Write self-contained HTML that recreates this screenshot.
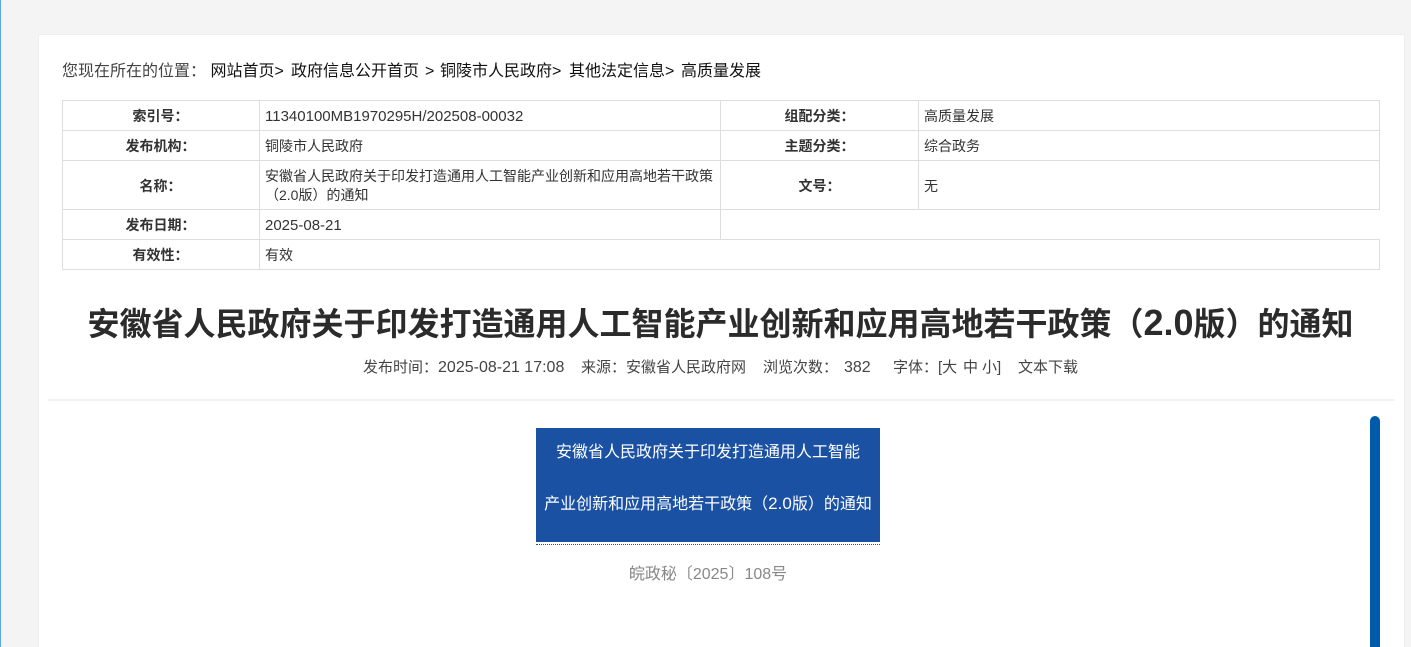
<!DOCTYPE html>
<html lang="zh">
<head>
<meta charset="utf-8">
<title>安徽省人民政府关于印发打造通用人工智能产业创新和应用高地若干政策（2.0版）的通知</title>
<style>
html,body{margin:0;padding:0;width:1411px;height:647px;overflow:hidden;background:#f4f4f4;}
body{position:relative;font-family:"Liberation Sans","Noto Sans CJK SC",sans-serif;color:#333;}
div{position:absolute;box-sizing:border-box;}
.t{white-space:nowrap;line-height:20px;}
.h{background:#ddd;height:1px;}
.v{background:#ddd;width:1px;}
.lab{font-size:14px;font-weight:bold;text-align:center;color:#333;}
.val{font-size:14px;color:#333;}
.bc{font-size:16px;color:#111;top:62px;}
.m{font-size:15px;color:#444;top:358px;}
.n{font-size:16px;}
</style>
</head>
<body>
<div style="left:0;top:0;width:1px;height:647px;background:#5fa3e3;"></div>
<div style="left:38px;top:34px;width:1367px;height:640px;background:#fff;border:1px solid #eee;"></div>

<div class="t bc" style="left:62px;color:#444;">您现在所在的位置：</div>
<div class="t bc" style="left:210.5px;">网站首页&gt;</div>
<div class="t bc" style="left:291px;">政府信息公开首页</div>
<div class="t bc" style="left:425px;">&gt;</div>
<div class="t bc" style="left:440px;">铜陵市人民政府&gt;</div>
<div class="t bc" style="left:569px;">其他法定信息&gt;</div>
<div class="t bc" style="left:681px;">高质量发展</div>

<!-- table lines -->
<div class="h" style="left:62px;top:100px;width:1318px;"></div>
<div class="h" style="left:62px;top:130px;width:1318px;"></div>
<div class="h" style="left:62px;top:160px;width:1318px;"></div>
<div class="h" style="left:62px;top:209px;width:1318px;"></div>
<div class="h" style="left:62px;top:239px;width:1318px;"></div>
<div class="h" style="left:62px;top:269px;width:1318px;"></div>
<div class="v" style="left:62px;top:100px;height:170px;"></div>
<div class="v" style="left:259px;top:100px;height:170px;"></div>
<div class="v" style="left:720px;top:100px;height:139px;"></div>
<div class="v" style="left:918px;top:100px;height:109px;"></div>
<div class="v" style="left:1379px;top:100px;height:109px;"></div>
<div class="v" style="left:1379px;top:239px;height:31px;"></div>

<!-- table text -->
<div class="t lab" style="left:62px;top:106px;width:197px;">索引号：</div>
<div class="t val" style="left:265px;top:107px;font-size:15px;">11340100MB1970295H/202508-00032</div>
<div class="t lab" style="left:721px;top:106px;width:197px;">组配分类：</div>
<div class="t val" style="left:924px;top:106px;">高质量发展</div>

<div class="t lab" style="left:62px;top:136px;width:197px;">发布机构：</div>
<div class="t val" style="left:265px;top:136px;">铜陵市人民政府</div>
<div class="t lab" style="left:721px;top:136px;width:197px;">主题分类：</div>
<div class="t val" style="left:924px;top:136px;">综合政务</div>

<div class="t lab" style="left:62px;top:176px;width:197px;">名称：</div>
<div class="t val" style="left:265px;top:166px;">安徽省人民政府关于印发打造通用人工智能产业创新和应用高地若干政策</div>
<div class="t val" style="left:265px;top:185px;">（2.0版）的通知</div>
<div class="t lab" style="left:721px;top:176px;width:197px;">文号：</div>
<div class="t val" style="left:924px;top:176px;">无</div>

<div class="t lab" style="left:62px;top:215px;width:197px;">发布日期：</div>
<div class="t val" style="left:265px;top:216px;font-size:15px;">2025-08-21</div>

<div class="t lab" style="left:62px;top:245px;width:197px;">有效性：</div>
<div class="t val" style="left:265px;top:245px;">有效</div>

<!-- title -->
<div class="t" style="left:40px;top:304px;width:1361px;line-height:40px;text-align:center;font-size:32px;font-weight:bold;color:#2b2b2b;">安徽省人民政府关于印发打造通用人工智能产业创新和应用高地若干政策（<span style="font-size:36px;line-height:0;">2.0</span>版）的通知</div>

<!-- meta -->
<div class="t m" style="left:363px;">发布时间：<span class="n">2025-08-21 17:08</span></div>
<div class="t m" style="left:581px;">来源：安徽省人民政府网</div>
<div class="t m" style="left:763px;">浏览次数：</div>
<div class="t m n" style="left:844px;">382</div>
<div class="t m" style="left:893px;">字体：</div>
<div class="t m" style="left:938px;">[大</div>
<div class="t m" style="left:963px;">中</div>
<div class="t m" style="left:982px;">小]</div>
<div class="t m" style="left:1018px;">文本下载</div>

<div style="left:48px;top:399px;width:1347px;height:2px;background:#f2f2f2;"></div>

<!-- banner -->
<div style="left:536px;top:428px;width:344px;height:114px;background:#1b51a3;"></div>
<div style="left:536px;top:544px;width:344px;height:0;border-top:1px dotted #1b51a3;"></div>
<div class="t" style="left:536px;top:443px;width:344px;text-align:center;font-size:16px;color:#fff;">安徽省人民政府关于印发打造通用人工智能</div>
<div class="t" style="left:536px;top:495px;width:344px;text-align:center;font-size:16px;color:#fff;">产业创新和应用高地若干政策（<span style="font-size:17px;line-height:0;">2.0</span>版）的通知</div>
<div class="t" style="left:536px;top:565px;width:344px;text-align:center;font-size:16px;color:#888;">皖政秘〔2025〕108号</div>

<!-- scrollbar -->
<div style="left:1370px;top:416px;width:10px;height:260px;background:#005bac;border-radius:5px;"></div>
</body>
</html>
